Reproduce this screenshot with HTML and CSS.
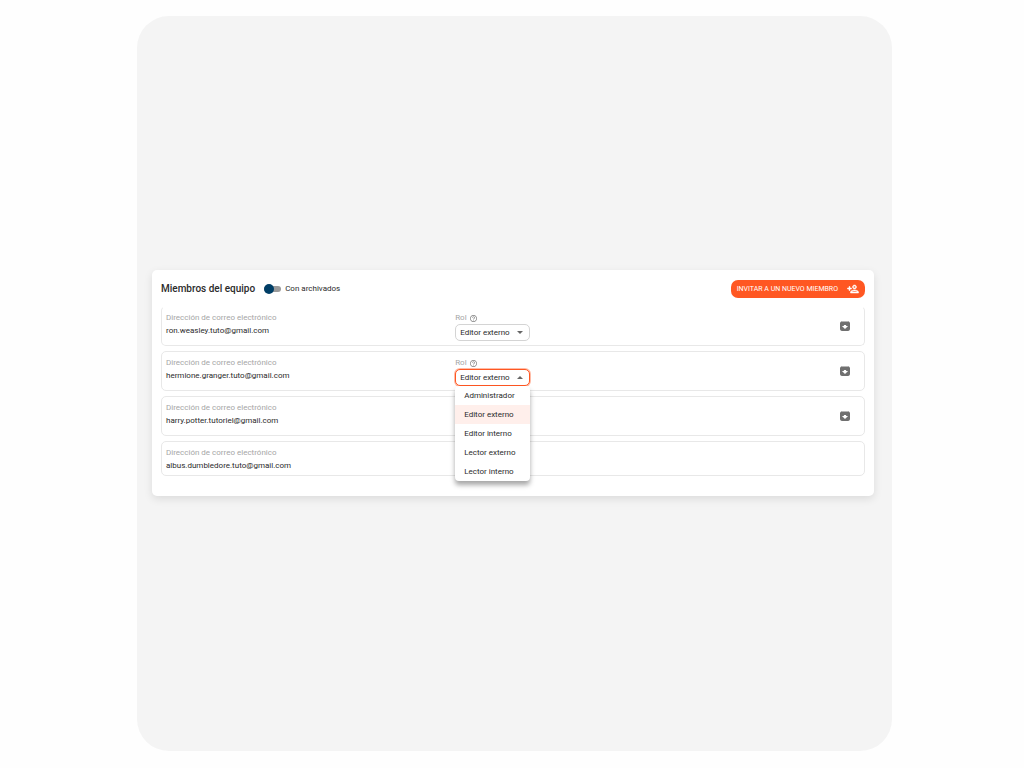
FILE: index.html
```
<!DOCTYPE html>
<html lang="es">

<head>
    <meta charset="UTF-8">
    <title>Miembros del equipo</title>
    <link rel="stylesheet" href="styles.css">
</head>

<body>
    <svg class="sprite" aria-hidden="true">
        <symbol id="icon-help" viewBox="2 2 20 20">
            <path d="M11 18h2v-2h-2v2zm1-16C6.48 2 2 6.48 2 12s4.480 10 10 10 10-4.480 10-10S17.520 2 12 2zm0 18c-4.410 0-8-3.590-8-8s3.590-8 8-8 8 3.590 8 8-3.590 8-8 8zm0-14c-2.210 0-4 1.790-4 4h2c0-1.100.9-2 2-2s2 .9 2 2c0 2-3 1.750-3 5h2c0-2.250 3-2.500 3-5 0-2.210-1.790-4-4-4z"/>
        </symbol>
        <symbol id="icon-archive" viewBox="3 3 18 18">
            <path d="M20.540 5.230l-1.390-1.680C18.880 3.210 18.470 3 18 3H6c-.47 0-.88.21-1.160.55L3.460 5.230C3.170 5.570 3 6.020 3 6.500V19c0 1.100.9 2 2 2h14c1.100 0 2-.9 2-2V6.500c0-.48-.17-.93-.46-1.270zM12 17.500L6.500 12H10v-2h4v2h3.500L12 17.500zM5.120 5l.81-1h12l.94 1H5.120z"/>
        </symbol>
        <symbol id="icon-arrow" viewBox="0 0 10 5">
            <path d="M0 0l5 5 5-5z"/>
        </symbol>
    </svg>

    <main class="panel">
        <section class="card">
            <header class="card-header">
                <h1 class="title">Miembros del equipo</h1>
                <label class="archived"><input type="checkbox" class="switch">Con archivados</label>
                <button type="button" class="invite">
                    INVITAR A UN NUEVO MIEMBRO
                    <svg class="invite-icon" viewBox="0 0 24 24">
                        <path d="M15 12c2.210 0 4-1.790 4-4s-1.790-4-4-4-4 1.790-4 4 1.790 4 4 4zm0-6c1.100 0 2 .9 2 2s-.9 2-2 2-2-.9-2-2 .9-2 2-2zm0 8c-2.670 0-8 1.340-8 4v2h16v-2c0-2.660-5.330-4-8-4zm-6 4c.22-.72 3.310-2 6-2 2.700 0 5.800 1.290 6 2H9zM6 15v-3h3v-2H6V7H4v3H1v2h3v3z"/>
                    </svg>
                </button>
            </header>

            <!-- Lista de miembros -->
            <ul class="members">
                <li class="member">
                    <div class="email">
                        <p class="caption">Dirección de correo electrónico</p>
                        <p class="value">ron.weasley.tuto@gmail.com</p>
                    </div>
                    <div class="role">
                        <label class="caption" for="role-ron">Rol <svg class="help"><use href="#icon-help"/></svg></label>
                        <div class="select-box">
                            <select id="role-ron" class="select">
                                <option>Administrador</option>
                                <option selected>Editor externo</option>
                                <option>Editor interno</option>
                                <option>Lector externo</option>
                                <option>Lector interno</option>
                            </select>
                            <svg class="arrow"><use href="#icon-arrow"/></svg>
                        </div>
                    </div>
                    <button type="button" class="archive" aria-label="Archivar"><svg class="archive-icon"><use href="#icon-archive"/></svg></button>
                </li>
                <li class="member">
                    <div class="email">
                        <p class="caption">Dirección de correo electrónico</p>
                        <p class="value">hermione.granger.tuto@gmail.com</p>
                    </div>
                    <div class="role">
                        <label class="caption" for="role-hermione">Rol <svg class="help"><use href="#icon-help"/></svg></label>
                        <div class="select-box">
                            <select id="role-hermione" class="select select-open">
                                <option>Administrador</option>
                                <option selected>Editor externo</option>
                                <option>Editor interno</option>
                                <option>Lector externo</option>
                                <option>Lector interno</option>
                            </select>
                            <svg class="arrow arrow-up"><use href="#icon-arrow"/></svg>
                            <!-- Menú desplegado -->
                            <div class="menu">
                                <button type="button" class="menu-item">Administrador</button>
                                <button type="button" class="menu-item selected">Editor externo</button>
                                <button type="button" class="menu-item">Editor interno</button>
                                <button type="button" class="menu-item">Lector externo</button>
                                <button type="button" class="menu-item">Lector interno</button>
                            </div>
                        </div>
                    </div>
                    <button type="button" class="archive" aria-label="Archivar"><svg class="archive-icon"><use href="#icon-archive"/></svg></button>
                </li>
                <li class="member">
                    <div class="email">
                        <p class="caption">Dirección de correo electrónico</p>
                        <p class="value">harry.potter.tutoriel@gmail.com</p>
                    </div>
                    <div class="role">
                        <label class="caption" for="role-harry">Rol <svg class="help"><use href="#icon-help"/></svg></label>
                        <div class="select-box">
                            <select id="role-harry" class="select">
                                <option>Administrador</option>
                                <option selected>Editor externo</option>
                                <option>Editor interno</option>
                                <option>Lector externo</option>
                                <option>Lector interno</option>
                            </select>
                            <svg class="arrow"><use href="#icon-arrow"/></svg>
                        </div>
                    </div>
                    <button type="button" class="archive" aria-label="Archivar"><svg class="archive-icon"><use href="#icon-archive"/></svg></button>
                </li>
                <li class="member">
                    <div class="email">
                        <p class="caption">Dirección de correo electrónico</p>
                        <p class="value">albus.dumbledore.tuto@gmail.com</p>
                    </div>
                </li>
            </ul>
            <!-- /Lista de miembros -->
        </section>
    </main>
</body>

</html>
```
FILE: styles.css
```
* {
    margin: 0;
    padding: 0;
    box-sizing: border-box;
}

body {
    display: flex;
    min-height: 100vh;
    padding: 16px 132px 17px 137px;
    background-color: #fefefe;
    color: #2b2b2b;
    font-family: Roboto, "Liberation Sans", Arial, sans-serif;
    font-size: 8px;
    line-height: 12px;
}

button,
select {
    font: inherit;
    color: inherit;
    border: none;
    background: none;
    cursor: pointer;
}

svg {
    fill: currentColor;
}

.sprite {
    position: absolute;
    width: 0;
    height: 0;
}

.panel {
    display: flex;
    flex: 1;
    align-items: center;
    padding: 0 18px 1px 15px;
    border-radius: 32px;
    background-color: #f4f4f4;
}

.card {
    flex: 1;
    padding: 10px 9px 20px;
    border-radius: 5px;
    background-color: white;
    box-shadow: 0 3px 9px rgba(0, 0, 0, 0.1);
}

/*cabecera*/

.card-header {
    display: flex;
    align-items: center;
    margin-bottom: 8px;
}

.title {
    font-size: 10px;
    font-weight: 500;
}

.archived {
    display: flex;
    align-items: center;
    gap: 4px;
    margin-left: 9px;
}

.switch {
    appearance: none;
    display: flex;
    align-items: center;
    width: 17px;
    height: 6px;
    border-radius: 3px;
    background-color: #9b9b9b;
}

.switch::before {
    content: "";
    flex: none;
    width: 10px;
    height: 10px;
    border-radius: 50%;
    background-color: #003e66;
}

.invite {
    display: flex;
    align-items: center;
    gap: 9px;
    height: 18px;
    margin-left: auto;
    padding: 0 6px;
    border-radius: 7px;
    background-color: #ff5722;
    color: white;
    font-size: 7px;
}

.invite-icon {
    width: 12px;
    height: 12px;
    stroke: currentColor;
    stroke-width: 1;
}

/*miembros*/

.members {
    display: grid;
    gap: 5px;
    list-style: none;
}

.member {
    display: grid;
    grid-template-columns: 5fr 6fr 1fr;
    padding: 5px 4px 2px;
    border: 1px solid #e8e8e8;
    border-radius: 5px;
}

.member:first-child {
    border-top-color: transparent;
}

.caption {
    display: flex;
    align-items: center;
    gap: 3px;
    color: #a6a6a6;
}

.value {
    line-height: 14px;
}

.help {
    width: 7px;
    height: 7px;
    color: #808080;
}

.role {
    margin-bottom: 2px;
}

.select-box {
    position: relative;
    width: 75px;
}

.select {
    appearance: none;
    display: block;
    width: 100%;
    height: 17px;
    padding: 0 4px;
    border: 1px solid #d4d4d4;
    border-radius: 5px;
    background-color: white;
}

.select-open {
    border-color: #ff5722;
    box-shadow: 0 0 0 1px rgba(255, 87, 34, 0.4);
}

.arrow {
    position: absolute;
    top: 7px;
    right: 7px;
    width: 6px;
    height: 3px;
    color: #666;
    pointer-events: none;
}

.arrow-up {
    transform: rotate(180deg);
}

.menu {
    position: absolute;
    z-index: 1;
    top: 100%;
    left: 0;
    width: 100%;
    overflow: hidden;
    border-radius: 4px;
    background-color: white;
    box-shadow: 0 4px 5px rgba(0, 0, 0, 0.35);
}

.menu-item {
    display: block;
    width: 100%;
    height: 19px;
    padding: 0 9px;
    text-align: left;
}

.menu-item.selected {
    background-color: #ffefeb;
}

.archive {
    align-self: center;
    justify-self: end;
    margin: 0 10px 4px 0;
    line-height: 0;
}

.archive-icon {
    width: 10px;
    height: 10px;
    border-radius: 2px;
    color: #707070;
}
```
